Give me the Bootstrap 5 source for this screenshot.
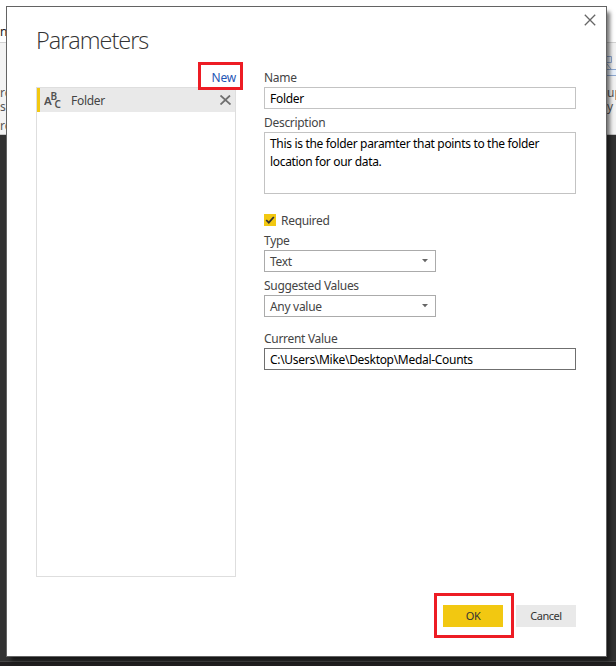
<!DOCTYPE html>
<html lang="en">
<head>
<meta charset="utf-8">
<title>Parameters</title>
<link href="https://cdn.jsdelivr.net/npm/bootstrap@5.3.0/dist/css/bootstrap.min.css" rel="stylesheet">
<style>
body{width:616px;height:666px;font:12px/18px "Noto Sans","Open Sans",sans-serif;color:#444;background:#323232}
.backdrop{height:666px}
.tabstrip{height:42px;background:#fff;color:#222;padding-top:23px}
.ribbon{height:93px;background:#f3f3f3;border-top:1px solid #d2d2d2;border-bottom:1px solid #c6c6c6;color:#555;line-height:14px}
.canvas-area{background:#323232}
.canvas-foot{height:5px;background:#211f20;border-top:1px solid #484848}
.edge-l{width:6px;white-space:nowrap;overflow:hidden}
.edge-r{width:13px;white-space:nowrap}
.edge-top{padding-top:43px}
.edge-low{padding-top:5px}
.dialog{left:6px;top:6px;width:601px;height:651px;background:#fff;border:1px solid #636363;box-shadow:4px 5px 4px -1px rgba(0,0,0,.55);padding:0 30px 0 29px}
.dlg-close{right:10px;top:6px}
.title{font:300 23.5px/32px "Open Sans","Noto Sans",sans-serif;color:#333;padding-top:17px;height:61px;letter-spacing:-1px}
.panes{gap:28px}
.side{width:200px}
.new-link{color:#1f56b5;height:19px;line-height:20px;letter-spacing:-.2px}
.plist{height:490px;border:1px solid #dedede}
.pitem{height:24px;background:#e9e9e9;border-left:3px solid #f2c811;padding:0 4px 0 4px}
.pname{padding:2px 0 0 9px}
.form-side{width:312px}
.lab{height:19px;line-height:20px;display:block}
.lab-type{margin-top:2px}
.lab-cur{margin-top:12px}
.field{border:1px solid #c3c3c3;height:22px;line-height:22px;padding:0 5px;color:#000}
.field-area{height:62px;line-height:18px;padding-top:2px;letter-spacing:-.33px}
.field-sel{border-color:#ababab;color:#444;width:172px;padding-right:6px}
.field-sel span{padding-top:2px}
.field-on{border-color:#6f6f6f}
.req{margin-top:17px;height:18px;gap:5px}
.req-text{padding-top:2px}
.chk{width:12px;height:12px;background:#f2c811}
.foot{margin-top:28px;gap:13px}
.dbtn{width:60px;height:22px;line-height:22px;font-size:11px;background:#e9e9e9;color:#333;letter-spacing:-.45px}
.dbtn-ok{background:#f2c811}
.callout{border:3px solid #ed1c24}
.callout-new{left:191px;top:55px;width:45px;height:28px}
.callout-ok{left:427px;top:586px;width:80px;height:45px}
.w1{letter-spacing:-.3px}
</style>
<script src="https://cdn.jsdelivr.net/npm/bootstrap@5.3.0/dist/js/bootstrap.bundle.min.js"></script>
</head>
<body class="position-relative overflow-hidden">
<div class="backdrop d-flex flex-column">
  <div class="tabstrip"><div class="edge-l">n</div></div>
  <div class="ribbon d-flex justify-content-between">
    <div class="edge-l"><div class="edge-top">rc</div><div>s</div><div class="edge-low">rc</div></div>
    <div class="edge-r">
      <svg class="d-block" width="13" height="43" fill="#eaf2fc" stroke="#8ea8d0"><path d="M1 13.500H8.500V19.500H1M4 21L8 26"/><path d="M1 26.500H16V32.500H1Z"/></svg>
      <div class="ps-1">up</div><div class="ps-1">y</div>
    </div>
  </div>
  <div class="canvas-area flex-grow-1"></div>
  <div class="canvas-foot"></div>
</div>

<div class="dialog position-absolute" role="dialog">
  <svg class="dlg-close position-absolute" width="12" height="13" stroke="#666" stroke-width="1.300"><path d="M.8 1.800L11.200 12.200M11.200 1.800L.8 12.200"/></svg>
  <div class="title">Parameters</div>
  <div class="panes d-flex">
    <div class="side">
      <div class="new-link text-end"><span>New</span></div>
      <div class="plist">
        <div class="pitem d-flex align-items-center">
          <svg width="18" height="20" fill="#505050" font-family="Noto Sans" font-weight="600"><text x="0" y="15" font-size="11.500">A</text><text x="6.500" y="9.500" font-size="10">B</text><text x="10.500" y="18" font-size="10">C</text></svg>
          <span class="pname flex-grow-1 w1">Folder</span>
          <svg width="11" height="10" stroke="#707070" stroke-width="1.800"><path d="M.5 .5L10.500 9.500M10 .5L.5 9.500"/></svg>
        </div>
      </div>
    </div>
    <div class="form-side">
      <label class="lab w1">Name</label>
      <div class="field w1">Folder</div>
      <label class="lab w1 mt-1">Description</label>
      <div class="field field-area">This is the folder paramter that points to the folder<br>location for our data.</div>
      <div class="req d-flex align-items-center">
        <span class="chk d-flex"><svg width="12" height="12" fill="none" stroke="#333" stroke-width="1.800"><path d="M2.200 6L4.800 8.700L9.800 3"/></svg></span>
        <span class="req-text w1">Required</span>
      </div>
      <label class="lab lab-type w1">Type</label>
      <div class="field field-sel w1 d-flex justify-content-between align-items-center"><span>Text</span><svg width="7" height="4" fill="#666"><path d="M0 0H6L3 3.300Z"/></svg></div>
      <label class="lab w1 mt-1">Suggested Values</label>
      <div class="field field-sel w1 d-flex justify-content-between align-items-center"><span>Any value</span><svg width="7" height="4" fill="#666"><path d="M0 0H6L3 3.300Z"/></svg></div>
      <label class="lab lab-cur w1">Current Value</label>
      <div class="field field-on w1">C:\Users\Mike\Desktop\Medal-Counts</div>
    </div>
  </div>
  <div class="foot d-flex justify-content-end">
    <div class="dbtn dbtn-ok text-center">OK</div>
    <div class="dbtn text-center">Cancel</div>
  </div>
  <div class="callout callout-new position-absolute"></div>
  <div class="callout callout-ok position-absolute"></div>
</div>
</body>
</html>
